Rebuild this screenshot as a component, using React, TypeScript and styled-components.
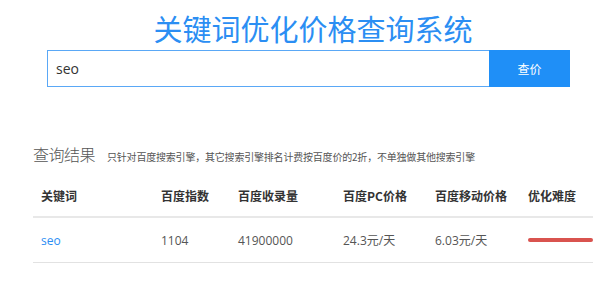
import * as React from 'react';
import styled, { createGlobalStyle } from 'styled-components';

const GlobalStyle = createGlobalStyle`
  html, body {
    margin: 0;
    padding: 0;
    background: #fff;
  }
  body {
    font-family: "Open Sans", "Noto Sans CJK SC", sans-serif;
  }
`;

const Page = styled.div`
  width: 560px;
  padding: 8px 7px 0 33px;
`;

const Title = styled.h1`
  margin: 0;
  text-align: center;
  font-family: "Noto Sans CJK SC", sans-serif;
  font-weight: 400;
  font-size: 29px;
  line-height: 40px;
  color: #2b8ef3;
`;

const SearchForm = styled.form`
  display: flex;
  margin: 2px 23px 0 14px;
  height: 37px;
`;

const SearchInput = styled.input`
  flex: 1;
  box-sizing: border-box;
  height: 37px;
  border: 1px solid #5aa8f6;
  border-right: none;
  padding: 0 8px;
  font-family: "Open Sans", "Noto Sans CJK SC", sans-serif;
  font-size: 14px;
  color: #333;
  outline: none;
`;

const SearchButton = styled.button`
  width: 81px;
  height: 37px;
  border: none;
  background: #1f8ff7;
  color: #fff;
  font-family: "Noto Sans CJK SC", sans-serif;
  font-size: 12px;
  cursor: pointer;
`;

const ResultHead = styled.div`
  display: flex;
  align-items: baseline;
  gap: 12px;
  margin-top: 55px;
  height: 24px;
`;

const ResultTitle = styled.h2`
  margin: 0;
  font-family: "Noto Sans CJK SC", sans-serif;
  font-weight: 300;
  font-size: 16px;
  line-height: 24px;
  color: #555;
  letter-spacing: -0.5px;
`;

const ResultNote = styled.span`
  font-family: "Noto Sans CJK SC", sans-serif;
  font-size: 10px;
  letter-spacing: -0.2px;
  color: #555;
`;

const Table = styled.table`
  width: 560px;
  margin-top: 9px;
  border-collapse: collapse;
  table-layout: fixed;
  font-family: "Open Sans", "Noto Sans CJK SC", sans-serif;
  font-size: 12px;
`;

const Th = styled.th<{ $w: number }>`
  width: ${(p) => p.$w}px;
  height: 41px;
  padding: 0 0 0 8px;
  text-align: left;
  font-family: "Noto Sans CJK SC", sans-serif;
  font-weight: 700;
  color: #333;
  border-bottom: 2px solid #e8e8e8;
`;

const Td = styled.td<{ $link?: boolean }>`
  height: 44px;
  padding: 0 0 0 8px;
  color: ${(p) => (p.$link ? '#2b8ef3' : '#555')};
  border-bottom: 1px solid #e2e2e2;
`;

const Bar = styled.div`
  height: 4px;
  border-radius: 2px;
  background: #d9534f;
`;

const columns = [
  { name: '关键词', w: 112 },
  { name: '百度指数', w: 69 },
  { name: '百度收录量', w: 97 },
  { name: '百度PC价格', w: 84 },
  { name: '百度移动价格', w: 85 },
  { name: '优化难度', w: 65 },
];

export default function App() {
  return (
    <>
      <GlobalStyle />
      <Page>
        <Title>关键词优化价格查询系统</Title>
        <SearchForm onSubmit={(e) => e.preventDefault()}>
          <SearchInput defaultValue="seo" />
          <SearchButton type="submit">查价</SearchButton>
        </SearchForm>

        <ResultHead>
          <ResultTitle>查询结果</ResultTitle>
          <ResultNote>只针对百度搜索引擎，其它搜索引擎排名计费按百度价的2折，不单独做其他搜索引擎</ResultNote>
        </ResultHead>

        <Table>
          <thead>
            <tr>
              {columns.map((c) => (
                <Th key={c.name} $w={c.w}>{c.name}</Th>
              ))}
            </tr>
          </thead>
          <tbody>
            <tr>
              <Td $link>seo</Td>
              <Td>1104</Td>
              <Td>41900000</Td>
              <Td>24.3元/天</Td>
              <Td>6.03元/天</Td>
              <Td>
                <Bar />
              </Td>
            </tr>
          </tbody>
        </Table>
      </Page>
    </>
  );
}
